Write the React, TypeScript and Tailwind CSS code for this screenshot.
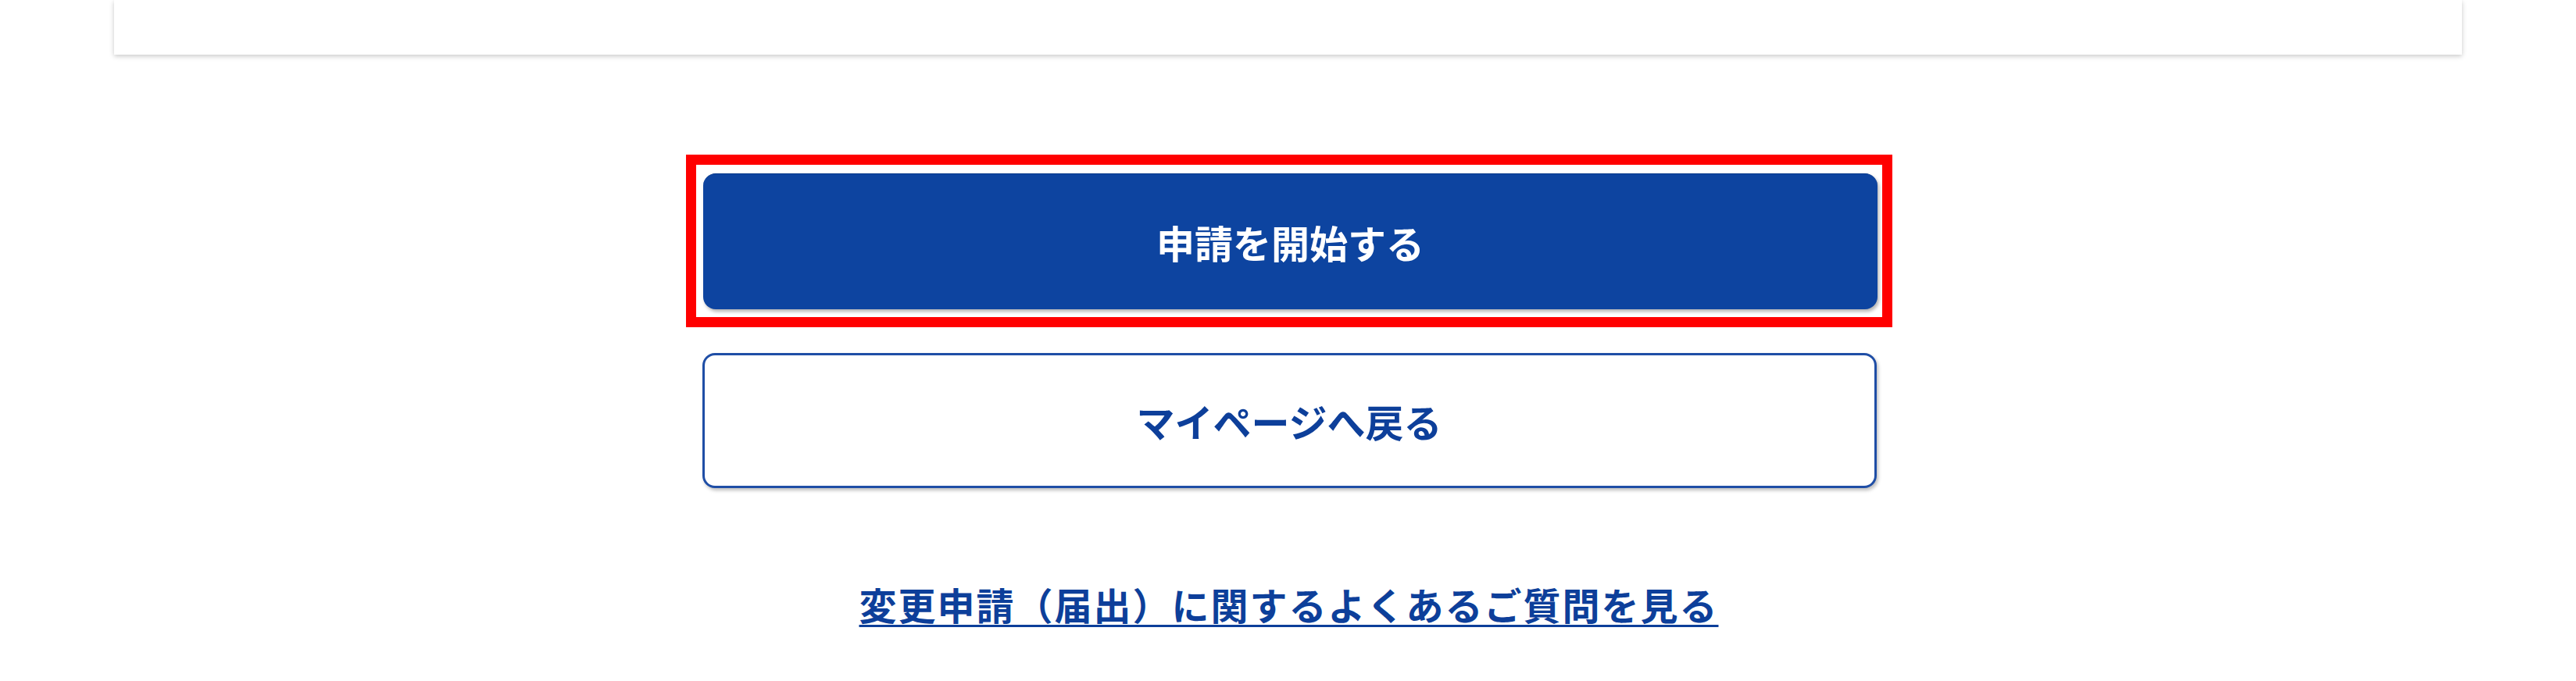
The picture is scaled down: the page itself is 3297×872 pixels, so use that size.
import React from "react";

const jp = { fontFamily: '"Noto Sans CJK JP", "Noto Sans", sans-serif' };

export default function App() {
  return (
    <div className="min-h-[872px] w-full bg-white" style={jp}>
      {/* bottom of the previous card */}
      <div className="mx-[146px] h-[70px] bg-white shadow-[0_2px_6px_rgba(0,0,0,0.22)]" />

      <div className="mt-[128px] flex flex-col items-center">
        {/* highlighted primary action */}
        <div className="ml-[3px] border-[13px] border-[#ff0000] pt-[11px] pb-[10px] pl-[9px] pr-[6px]">
          <button className="flex h-[174px] w-[1503px] items-center justify-center rounded-[16px] border-t border-[#083a8c] bg-[#0d44a0] text-[49px] font-bold text-white shadow-[2px_3px_4px_rgba(0,0,0,0.3)]">
            申請を開始する
          </button>
        </div>

        <button className="mt-[33px] ml-[3px] flex h-[173px] w-[1503px] items-center justify-center rounded-[16px] border-[3px] border-[#1f4ea6] bg-white text-[49px] font-bold text-[#0d3f9a] shadow-[2px_3px_4px_rgba(0,0,0,0.25)]">
          マイページへ戻る
        </button>

        <a
          href="#"
          className="mt-[124px] ml-[2px] text-[48px] font-bold leading-none tracking-[2px] text-[#0d3f9a] underline decoration-[3px] underline-offset-[6px]"
        >
          変更申請（届出）に関するよくあるご質問を見る
        </a>
      </div>
    </div>
  );
}
